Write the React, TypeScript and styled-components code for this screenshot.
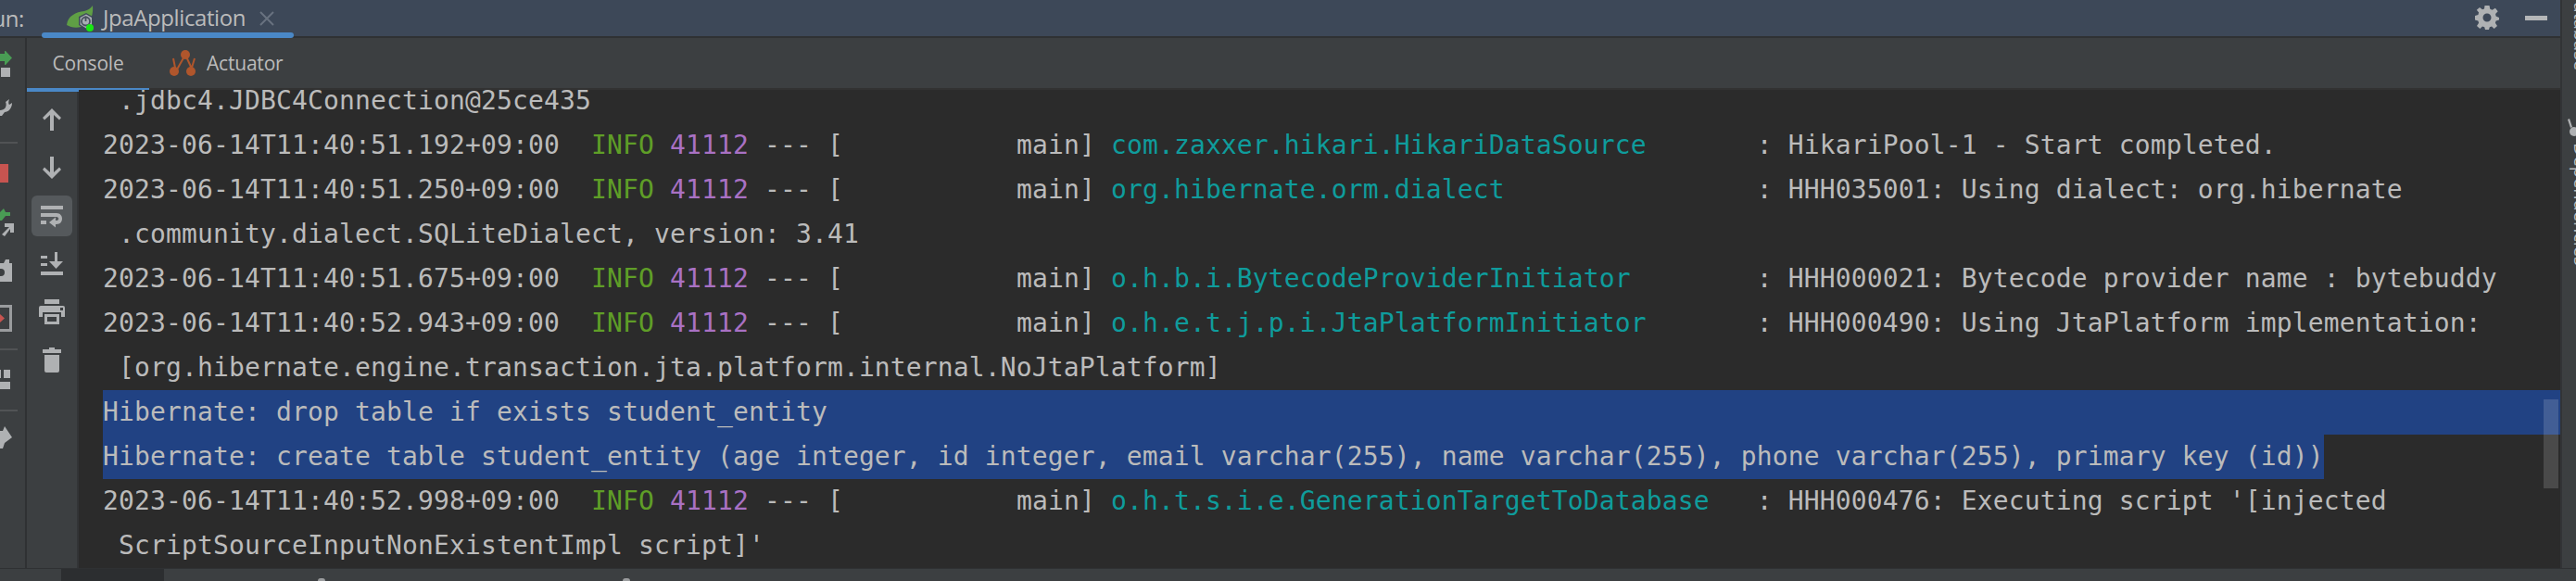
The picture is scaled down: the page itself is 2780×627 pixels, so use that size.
import React from 'react';
import styled, { createGlobalStyle } from 'styled-components';

const GlobalStyle = createGlobalStyle`
    html, body {
        margin: 0;
        padding: 0;
        background: #2b2b2b;
        overflow: hidden;
    }
`
const Window = styled.div`
    width: 2780px;
    height: 627px;
    display: flex;
    flex-direction: column;
    overflow: hidden;
    background: #3c3f41;
    font-family: "Open Sans", "Noto Sans", sans-serif;
`
const Workspace = styled.div`
    flex: 1;
    min-height: 0;
    display: flex;
`
const MainColumn = styled.div`
    width: 2763px;
    display: flex;
    flex-direction: column;
`
const RunBar = styled.div`
    height: 39px;
    flex: none;
    display: flex;
    align-items: center;
    background: #3d4858;
    border-bottom: 2px solid #2f3133;
    color: #bbbbbb;
`
const RunLabel = styled.div`
    margin-left: -23px;
    width: 68px;
    flex: none;
    font-size: 24px;
    letter-spacing: -0.4px;
`
const RunTab = styled.div`
    position: relative;
    width: 272px;
    height: 39px;
    flex: none;
    display: flex;
    align-items: center;
    padding-left: 26px;
    box-sizing: border-box;
    font-size: 24px;
    letter-spacing: -0.4px;
    &::after {
        content: '';
        position: absolute;
        left: 0;
        right: 0;
        top: 35px;
        height: 6px;
        border-radius: 3px;
        background: #4a88c7;
    }
`
const TabTitle = styled.span`
    margin-left: 8px;
    margin-top: -2px;
`
const CloseMark = styled.svg`
    margin-left: 15px;
    flex: none;
`
const BarActions = styled.div`
    margin-left: auto;
    margin-right: 14px;
    display: flex;
    align-items: center;
    gap: 28px;
`
const MinimizeMark = styled.div`
    width: 24px;
    height: 5px;
    background: #b4b6b8;
`
const WorkArea = styled.div`
    flex: 1;
    min-height: 0;
    display: flex;
`
const ActionStrip = styled.div`
    width: 27px;
    flex: none;
    display: flex;
    flex-direction: column;
    background: #3c3f41;
    border-right: 2px solid #2f3133;
`
const StripIcon = styled.svg<{ $top: number }>`
    display: block;
    flex: none;
    margin-top: ${({ $top }) => $top}px;
`
const StripDivider = styled.div<{ $top: number }>`
    width: 19px;
    height: 2px;
    flex: none;
    background: #515355;
    margin-top: ${({ $top }) => $top}px;
`
const ToolWindow = styled.div`
    flex: 1;
    min-width: 0;
    display: flex;
    flex-direction: column;
`
const TabBar = styled.div`
    height: 54px;
    flex: none;
    display: flex;
    background: #3c3f41;
    border-bottom: 2px solid #323232;
    color: #bbbbbb;
    font-size: 21px;
`
const SubTab = styled.div<{ $active?: boolean; $width: number }>`
    position: relative;
    width: ${({ $width }) => $width}px;
    flex: none;
    display: flex;
    align-items: center;
    justify-content: ${({ $active }) => ($active ? 'center' : 'flex-start')};
    gap: 10px;
    padding-left: ${({ $active }) => ($active ? 0 : 24)}px;
    box-sizing: border-box;
    letter-spacing: -0.2px;
    ${({ $active }) => $active && `
        &::after {
            content: '';
            position: absolute;
            left: 0;
            right: 0;
            top: 54px;
            height: 4px;
            background: #4a88c7;
        }
    `}
`
const ConsoleArea = styled.div`
    flex: 1;
    min-height: 0;
    display: flex;
`
const ConsoleTools = styled.div`
    width: 56px;
    flex: none;
    display: flex;
    flex-direction: column;
    align-items: center;
    gap: 8px;
    padding-top: 10px;
    box-sizing: border-box;
    background: #3c3f41;
    border-right: 2px solid #323436;
`
const ToolButton = styled.div<{ $pressed?: boolean }>`
    width: 44px;
    height: 44px;
    flex: none;
    display: flex;
    align-items: center;
    justify-content: center;
    border-radius: 6px;
    background: ${({ $pressed }) => ($pressed ? '#55595c' : 'transparent')};
    color: #afb1b3;
`
const ConsoleOutput = styled.div`
    position: relative;
    flex: 1;
    min-width: 0;
    overflow: hidden;
    padding-left: 26px;
    background: #2b2b2b;
    font-family: "DejaVu Sans Mono", "Liberation Mono", monospace;
    font-size: 28px;
    letter-spacing: 0.14px;
    color: #bbbbbb;
`
const LogLines = styled.div`
    margin-top: -12px;
`
const LogRow = styled.div<{ $selected?: boolean; $full?: boolean }>`
    height: 48px;
    line-height: 48px;
    white-space: pre;
    width: ${({ $full }) => ($full ? 'auto' : 'fit-content')};
    background: ${({ $selected }) => ($selected ? '#214283' : 'transparent')};
`
const Level = styled.span`
    color: #5f9e27;
`
const Pid = styled.span`
    color: #a971c4;
`
const LoggerName = styled.span`
    color: #0f9c9c;
`
const ScrollThumb = styled.div`
    position: absolute;
    right: 2px;
    top: 334px;
    width: 16px;
    height: 96px;
    background: rgba(255, 255, 255, 0.15);
`
const SideDivider = styled.div`
    width: 2px;
    flex: none;
    background: #323436;
`
const SideStrip = styled.div`
    flex: 1;
    min-width: 0;
    overflow: hidden;
    display: flex;
    flex-direction: column;
    padding-left: 7px;
    color: #bbbbbb;
    font-size: 20px;
`
const SideLabel = styled.div<{ $top: number }>`
    writing-mode: vertical-rl;
    line-height: 26px;
    width: 26px;
    flex: none;
    white-space: nowrap;
    margin-top: ${({ $top }) => $top}px;
`
const SideIcon = styled.svg`
    display: block;
    flex: none;
    margin: 52px 0 0 -7px;
`
const StatusStrip = styled.div`
    height: 14px;
    flex: none;
    display: flex;
    background: #3c3f41;
    border-top: 1px solid #2f3133;
    box-sizing: border-box;
`
const StatusSlot = styled.div<{ $active?: boolean; $width: number }>`
    width: ${({ $width }) => $width}px;
    flex: none;
    background: ${({ $active }) => ($active ? '#2c2e30' : 'transparent')};
`
const StatusIconTip = styled.div<{ $left: number }>`
    width: 8px;
    height: 3px;
    flex: none;
    margin: 10px 0 0 ${({ $left }) => $left}px;
    border-radius: 4px 4px 0 0;
    background: #9a9c9e;
`

const SpringIcon = () => (
    <svg width="32" height="30" viewBox="0 0 32 30" style={{ flex: 'none' }}>
        <path d="M1 22C2 12 11 8 20 7C24 6 27 4 29 1C30 10 27 18 22 22C14 26 6 25 1 22Z" fill="#5f9f45" />
        <path d="M14 13L22 9L29 13V22L22 27L14 22Z" fill="#3d4858" />
        <path d="M15.500 14L22 10.500L28 14V21.500L22 25.500L15.500 21.500Z" fill="#a8adb3" />
        <circle cx="21.500" cy="18" r="4.500" fill="none" stroke="#4a5260" strokeWidth="1.800" />
        <path d="M21.500 12.500V18" stroke="#4a5260" strokeWidth="1.800" />
        <circle cx="26" cy="25" r="4" fill="#17e812" />
    </svg>
)

const ActuatorIcon = () => (
    <svg width="30" height="30" viewBox="0 0 30 30" style={{ flex: 'none', marginLeft: -2 }}>
        <path d="M17 6L8 22M17 6L23 19M4 10L6 20M27 10L24 20" stroke="#b0562c" strokeWidth="2" fill="none" />
        <circle cx="17" cy="6" r="5" fill="#b0562c" />
        <circle cx="5" cy="24" r="5" fill="#b0562c" />
        <circle cx="23" cy="24" r="5" fill="#b0562c" />
    </svg>
)

const GearIcon = () => (
    <svg width="26" height="26" viewBox="0 0 26 26" style={{ marginTop: -1 }}>
        <path
            fill="#afb1b3"
            fillRule="evenodd"
            d="M10.500 0H15.500L16.300 3.700L18.600 4.700L21.900 2.700L24.700 6.300L22.100 9L22.600 11.500L26 13L26 15.500L22.600 16.500L21.900 18.800L24 22L20.700 25L18 22.600L15.800 23.300L15 26H11L10.200 23.300L8 22.600L5.300 25L2 22L4.100 18.800L3.400 16.500L0 15.500V11L3.400 10L4.100 7.500L1.800 4.700L5 2L8 4.300L10 3.500ZM13 8.500A4.500 4.500 0 1 0 13 17.500A4.500 4.500 0 1 0 13 8.500Z"
        />
    </svg>
)

const UpIcon = () => (
    <svg width="24" height="26" viewBox="0 0 24 26">
        <path d="M12 1L22 11L20 13.500L14 8V25H10V8L4 13.500L2 11Z" fill="currentColor" />
    </svg>
)

const DownIcon = () => (
    <svg width="24" height="26" viewBox="0 0 24 26">
        <path d="M12 25L22 15L20 12.500L14 18V1H10V18L4 12.500L2 15Z" fill="currentColor" />
    </svg>
)

const WrapIcon = () => (
    <svg width="26" height="26" viewBox="0 0 26 26">
        <path d="M1 2H25V6H1ZM1 10H18C26 10 26 22 18 22H15V18H18C21 18 21 14 18 14H1ZM1 18H7V22H1Z" fill="currentColor" />
        <path d="M17 14.500V25.500L10 20Z" fill="currentColor" />
    </svg>
)

const ScrollEndIcon = () => (
    <svg width="26" height="26" viewBox="0 0 26 26">
        <path d="M1 4H8V7H1ZM1 12H8V15H1ZM1 21H25V25H1ZM16 0H19V10H25L17.500 18L10 10H16Z" fill="currentColor" />
    </svg>
)

const PrintIcon = () => (
    <svg width="28" height="28" viewBox="0 0 28 28">
        <path
            fill="currentColor"
            fillRule="evenodd"
            d="M6 0H22V5H6ZM2 7H26Q28 7 28 9V19H24V14H4V19H0V9Q0 7 2 7ZM6 16H22V27H6ZM9 19V24H19V19ZM23 9V12H26V9Z"
        />
    </svg>
)

const TrashIcon = () => (
    <svg width="22" height="28" viewBox="0 0 22 28">
        <path d="M8 0H14V2H21V6H1V2H8ZM3 8H19V25Q19 27 17 27H5Q3 27 3 25Z" fill="currentColor" />
    </svg>
)

const LogPrefix = ({ time }: { time: string }) => (
    <>
        {time}  <Level>INFO</Level> <Pid>41112</Pid> --- [           main]{' '}
    </>
)

export default function App() {
    return (
        <Window>
            <GlobalStyle />
            <Workspace>
                <MainColumn>
                    <RunBar>
                        <RunLabel>Run:</RunLabel>
                        <RunTab>
                            <SpringIcon />
                            <TabTitle>JpaApplication</TabTitle>
                            <CloseMark width="16" height="16" viewBox="0 0 16 16">
                                <path d="M1 1L15 15M15 1L1 15" stroke="#68727f" strokeWidth="2" />
                            </CloseMark>
                        </RunTab>
                        <BarActions>
                            <GearIcon />
                            <MinimizeMark />
                        </BarActions>
                    </RunBar>
                    <WorkArea>
                        <ActionStrip>
                            <StripIcon $top={14} width="27" height="28" viewBox="0 0 27 28">
                                <path d="M0 3H5V0H6L13 7.500L6 15H5V11H0Z" fill="#499c54" />
                                <rect x="1" y="18" width="10" height="10" fill="#afb1b3" />
                            </StripIcon>
                            <StripIcon $top={24} width="27" height="18" viewBox="0 0 27 18">
                                <path d="M0 12C5 12 8 8 6 3L10 0C9 3 9 5 10 6L13 4C13 10 9 14 5 14L2 18H0Z" fill="#afb1b3" />
                            </StripIcon>
                            <StripDivider $top={28} />
                            <StripIcon $top={22} width="27" height="20" viewBox="0 0 27 20">
                                <rect x="0" y="0" width="9" height="20" fill="#c75450" />
                            </StripIcon>
                            <StripIcon $top={28} width="27" height="30" viewBox="0 0 27 30">
                                <path d="M4 0L6 4H11V8H6L2 13H0V4Z" fill="#499c54" />
                                <path d="M2 28L10 20H5V16H15V26H11V22L5 30Z" fill="#afb1b3" />
                            </StripIcon>
                            <StripIcon $top={25} width="27" height="24" viewBox="0 0 27 24">
                                <path fillRule="evenodd" d="M0 4H4L6 0H10L10 4H13V24H0ZM1 10A4 4 0 1 0 1 18A4 4 0 1 0 1 10Z" fill="#afb1b3" />
                            </StripIcon>
                            <StripIcon $top={25} width="27" height="29" viewBox="0 0 27 29">
                                <path fillRule="evenodd" d="M0 0H13V29H0V26H10V3H0Z" fill="#9a9c9e" />
                                <path d="M0 10L5 14.500L0 19Z" fill="#c75450" />
                            </StripIcon>
                            <StripDivider $top={18} />
                            <StripIcon $top={21} width="27" height="21" viewBox="0 0 27 21">
                                <path d="M0 0H1V9H0ZM4 0H11V9H4ZM0 13H11V21H0Z" fill="#afb1b3" />
                            </StripIcon>
                            <StripDivider $top={22} />
                            <StripIcon $top={16} width="27" height="24" viewBox="0 0 27 24">
                                <path d="M5 0L13 12L5 18L3 24H0V5H3Z" fill="#afb1b3" />
                            </StripIcon>
                        </ActionStrip>
                        <ToolWindow>
                            <TabBar>
                                <SubTab $active $width={132}>Console</SubTab>
                                <SubTab $width={200}>
                                    <ActuatorIcon />
                                    Actuator
                                </SubTab>
                            </TabBar>
                            <ConsoleArea>
                                <ConsoleTools>
                                    <ToolButton><UpIcon /></ToolButton>
                                    <ToolButton><DownIcon /></ToolButton>
                                    <ToolButton $pressed><WrapIcon /></ToolButton>
                                    <ToolButton><ScrollEndIcon /></ToolButton>
                                    <ToolButton><PrintIcon /></ToolButton>
                                    <ToolButton><TrashIcon /></ToolButton>
                                </ConsoleTools>
                                <ConsoleOutput>
                                    <LogLines>
                                        <LogRow> .jdbc4.JDBC4Connection@25ce435</LogRow>
                                        <LogRow>
                                            <LogPrefix time="2023-06-14T11:40:51.192+09:00" />
                                            <LoggerName>com.zaxxer.hikari.HikariDataSource      </LoggerName> : HikariPool-1 - Start completed.
                                        </LogRow>
                                        <LogRow>
                                            <LogPrefix time="2023-06-14T11:40:51.250+09:00" />
                                            <LoggerName>org.hibernate.orm.dialect               </LoggerName> : HHH035001: Using dialect: org.hibernate
                                        </LogRow>
                                        <LogRow> .community.dialect.SQLiteDialect, version: 3.41</LogRow>
                                        <LogRow>
                                            <LogPrefix time="2023-06-14T11:40:51.675+09:00" />
                                            <LoggerName>o.h.b.i.BytecodeProviderInitiator       </LoggerName> : HHH000021: Bytecode provider name : bytebuddy
                                        </LogRow>
                                        <LogRow>
                                            <LogPrefix time="2023-06-14T11:40:52.943+09:00" />
                                            <LoggerName>o.h.e.t.j.p.i.JtaPlatformInitiator      </LoggerName> : HHH000490: Using JtaPlatform implementation:
                                        </LogRow>
                                        <LogRow> [org.hibernate.engine.transaction.jta.platform.internal.NoJtaPlatform]</LogRow>
                                        <LogRow $selected $full>Hibernate: drop table if exists student_entity</LogRow>
                                        <LogRow $selected>Hibernate: create table student_entity (age integer, id integer, email varchar(255), name varchar(255), phone varchar(255), primary key (id))</LogRow>
                                        <LogRow>
                                            <LogPrefix time="2023-06-14T11:40:52.998+09:00" />
                                            <LoggerName>o.h.t.s.i.e.GenerationTargetToDatabase  </LoggerName> : HHH000476: Executing script '[injected
                                        </LogRow>
                                        <LogRow> ScriptSourceInputNonExistentImpl script]'</LogRow>
                                    </LogLines>
                                    <ScrollThumb />
                                </ConsoleOutput>
                            </ConsoleArea>
                        </ToolWindow>
                    </WorkArea>
                </MainColumn>
                <SideDivider />
                <SideStrip>
                    <SideLabel $top={-12}>Database</SideLabel>
                    <SideIcon width="15" height="20" viewBox="0 0 15 20">
                        <path d="M8 0L11 9L9 10L6 1Z" fill="#afb1b3" />
                        <circle cx="13" cy="14" r="5" fill="#afb1b3" />
                    </SideIcon>
                    <SideLabel $top={6}>Dependencies</SideLabel>
                </SideStrip>
            </Workspace>
            <StatusStrip>
                <StatusSlot $width={66} />
                <StatusSlot $active $width={111} />
                <StatusIconTip $left={166} />
                <StatusIconTip $left={321} />
            </StatusStrip>
        </Window>
    );
}
